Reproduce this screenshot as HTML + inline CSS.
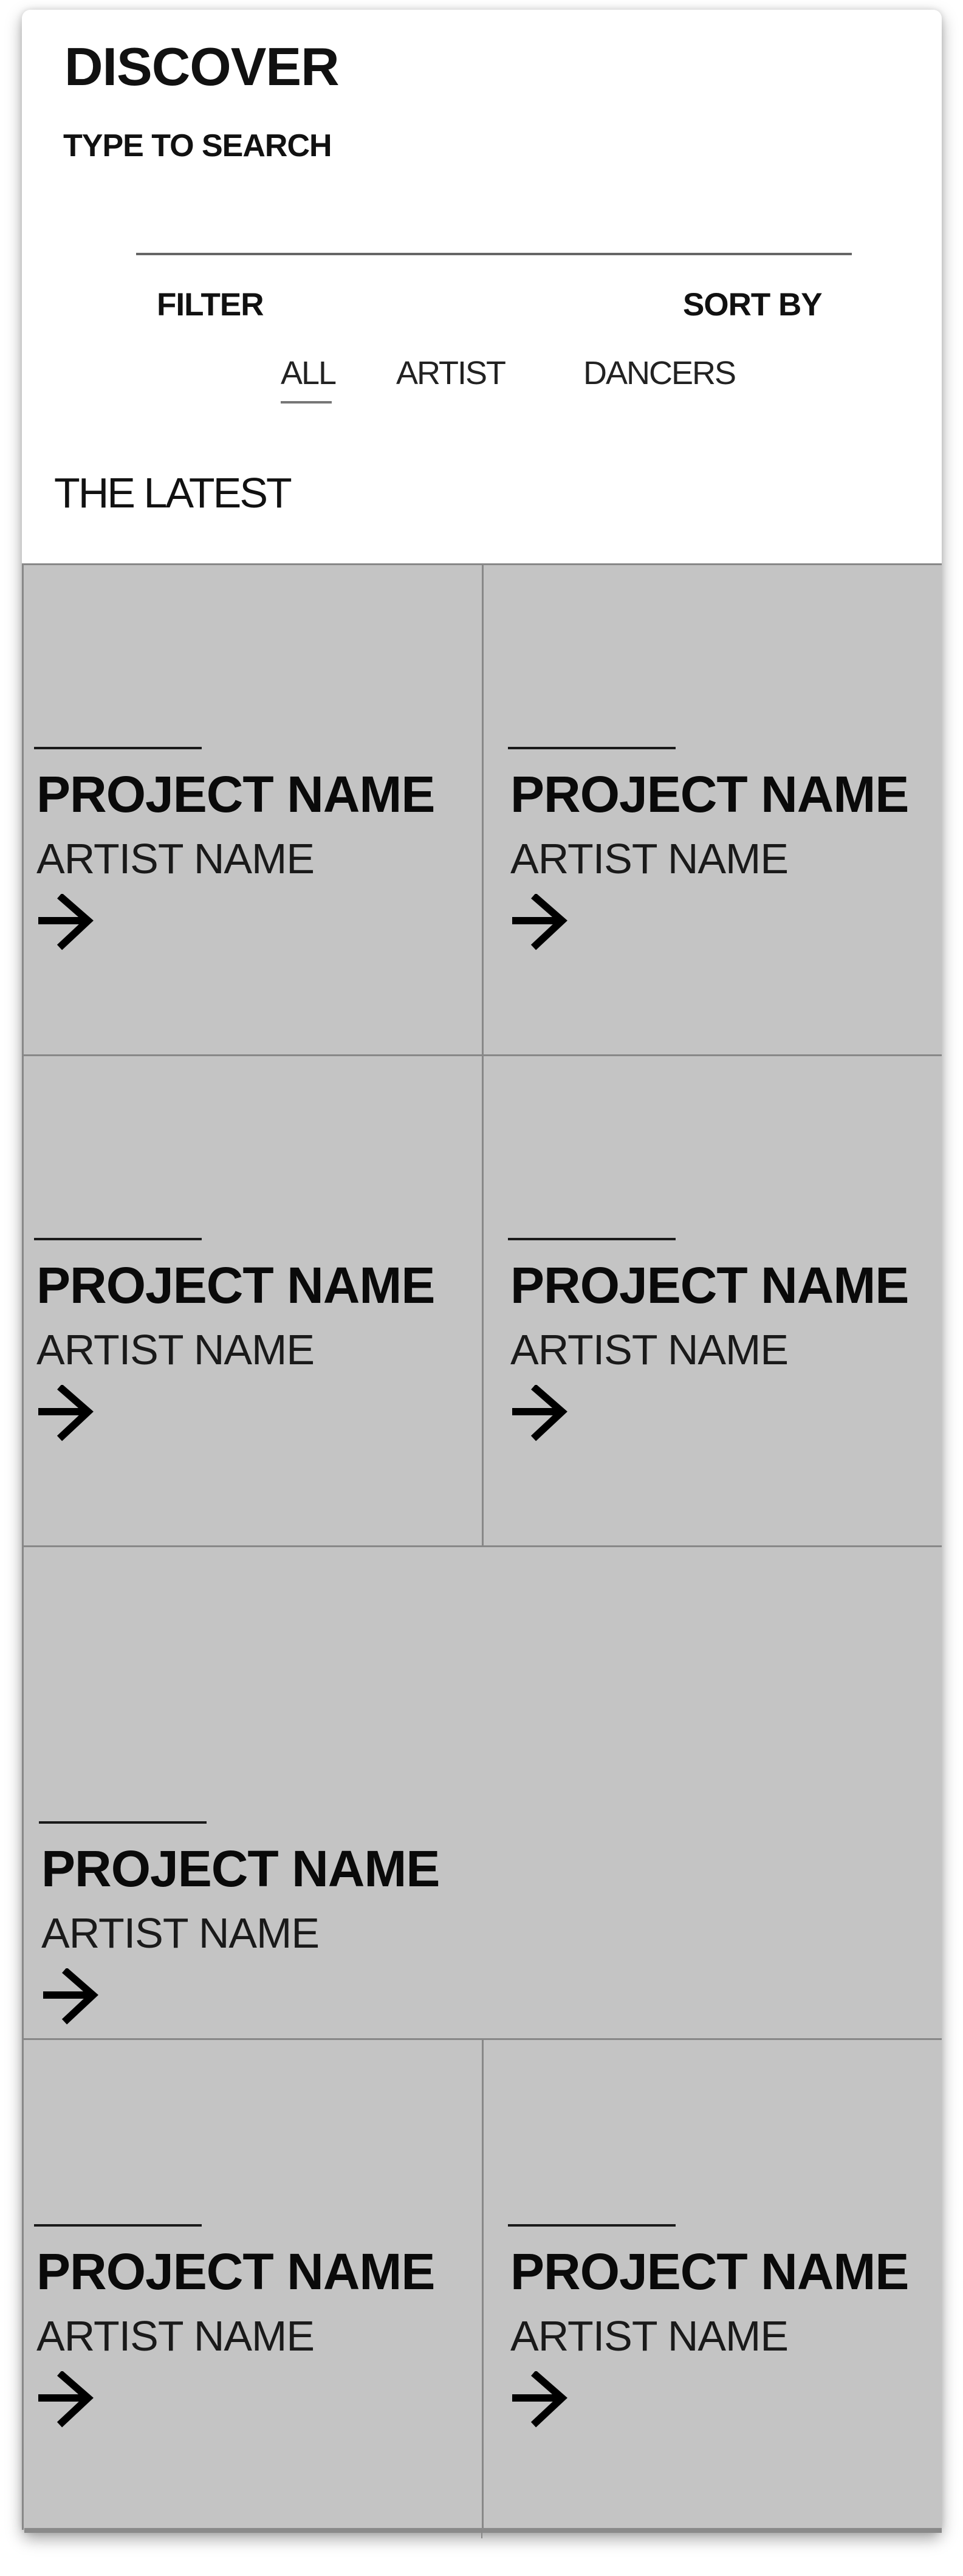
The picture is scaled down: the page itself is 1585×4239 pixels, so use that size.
<!DOCTYPE html>
<html><head><meta charset="utf-8"><style>
*{margin:0;padding:0;box-sizing:border-box}
body{width:1585px;height:4239px;background:#fff;position:relative;overflow:hidden;font-family:"Liberation Sans",sans-serif;color:#111}
.card{position:absolute;left:36px;top:16px;width:1514px;height:4152px;background:#fff;border-radius:14px;box-shadow:0 10px 26px rgba(0,0,0,.35),0 0 10px rgba(0,0,0,.12);overflow:hidden}
.t{position:absolute;line-height:1;white-space:nowrap}
.b{font-weight:bold}
.cell{position:absolute;background:#c4c4c4;border-top:3px solid #888;border-left:3px solid #888}
.ln{position:absolute;height:4px;width:276px;background:#1a1a1a}
.pn{position:absolute;font-size:84px;font-weight:bold;line-height:1;white-space:nowrap;color:#0a0a0a;letter-spacing:-1px}
.an{position:absolute;font-size:70px;line-height:1;white-space:nowrap;color:#1a1a1a;letter-spacing:-1px}
.ar{position:absolute;width:92px;height:94px}
</style></head><body>
<div class="card"></div>
<div class="t b" style="left:106px;top:66px;font-size:88px;letter-spacing:-1px">DISCOVER</div>
<div class="t b" style="left:104px;top:214px;font-size:52px;letter-spacing:-1px">TYPE TO SEARCH</div>
<div style="position:absolute;left:224px;top:416px;width:1178px;height:4px;background:#666"></div>
<div class="t b" style="left:258px;top:475px;font-size:53px;letter-spacing:-1px">FILTER</div>
<div class="t b" style="left:1124px;top:475px;font-size:53px;letter-spacing:-1px">SORT BY</div>
<div class="t" style="left:462px;top:587px;font-size:54px;color:#222;letter-spacing:-2px">ALL</div>
<div class="t" style="left:652px;top:587px;font-size:54px;color:#222;letter-spacing:-2px">ARTIST</div>
<div class="t" style="left:960px;top:587px;font-size:54px;color:#222;letter-spacing:-2px">DANCERS</div>
<div style="position:absolute;left:462px;top:660px;width:84px;height:4px;background:#777"></div>
<div class="t" style="left:89px;top:776px;font-size:70px;letter-spacing:-3px">THE LATEST</div>

<div class="cell" style="left:36px;top:927px;width:758px;height:808px"></div>
<div class="cell" style="left:793px;top:927px;width:757px;height:808px"></div>
<div class="cell" style="left:36px;top:1735px;width:758px;height:808px"></div>
<div class="cell" style="left:793px;top:1735px;width:757px;height:808px"></div>
<div class="cell" style="left:36px;top:2543px;width:1514px;height:811px"></div>
<div class="cell" style="left:36px;top:3354px;width:758px;height:809px"></div>
<div class="cell" style="left:793px;top:3354px;width:757px;height:809px"></div>
<div style="position:absolute;left:40px;top:4160px;width:1510px;height:8px;background:#8a8a8a"></div>
<div style="position:absolute;left:792px;top:4163px;width:2px;height:14px;background:#888"></div>

<svg width="0" height="0" style="position:absolute"><defs><g id="arr"><path d="M0 44H82M35 3L82 44L35 88" fill="none" stroke="#000" stroke-width="12" stroke-linejoin="miter"/></g></defs></svg>

<div class="ln" style="left:56px;top:1229px"></div>
<div class="pn" style="left:60px;top:1265px">PROJECT NAME</div>
<div class="an" style="left:60px;top:1378px">ARTIST NAME</div>
<svg class="ar" style="left:63px;top:1471px" viewBox="0 0 92 94"><use href="#arr"/></svg>
<div class="ln" style="left:836px;top:1229px"></div>
<div class="pn" style="left:840px;top:1265px">PROJECT NAME</div>
<div class="an" style="left:840px;top:1378px">ARTIST NAME</div>
<svg class="ar" style="left:843px;top:1471px" viewBox="0 0 92 94"><use href="#arr"/></svg>

<div class="ln" style="left:56px;top:2037px"></div>
<div class="pn" style="left:60px;top:2073px">PROJECT NAME</div>
<div class="an" style="left:60px;top:2186px">ARTIST NAME</div>
<svg class="ar" style="left:63px;top:2279px" viewBox="0 0 92 94"><use href="#arr"/></svg>
<div class="ln" style="left:836px;top:2037px"></div>
<div class="pn" style="left:840px;top:2073px">PROJECT NAME</div>
<div class="an" style="left:840px;top:2186px">ARTIST NAME</div>
<svg class="ar" style="left:843px;top:2279px" viewBox="0 0 92 94"><use href="#arr"/></svg>

<div class="ln" style="left:64px;top:2997px"></div>
<div class="pn" style="left:68px;top:3033px">PROJECT NAME</div>
<div class="an" style="left:68px;top:3146px">ARTIST NAME</div>
<svg class="ar" style="left:71px;top:3239px" viewBox="0 0 92 94"><use href="#arr"/></svg>

<div class="ln" style="left:56px;top:3660px"></div>
<div class="pn" style="left:60px;top:3696px">PROJECT NAME</div>
<div class="an" style="left:60px;top:3809px">ARTIST NAME</div>
<svg class="ar" style="left:63px;top:3902px" viewBox="0 0 92 94"><use href="#arr"/></svg>
<div class="ln" style="left:836px;top:3660px"></div>
<div class="pn" style="left:840px;top:3696px">PROJECT NAME</div>
<div class="an" style="left:840px;top:3809px">ARTIST NAME</div>
<svg class="ar" style="left:843px;top:3902px" viewBox="0 0 92 94"><use href="#arr"/></svg>
</body></html>
